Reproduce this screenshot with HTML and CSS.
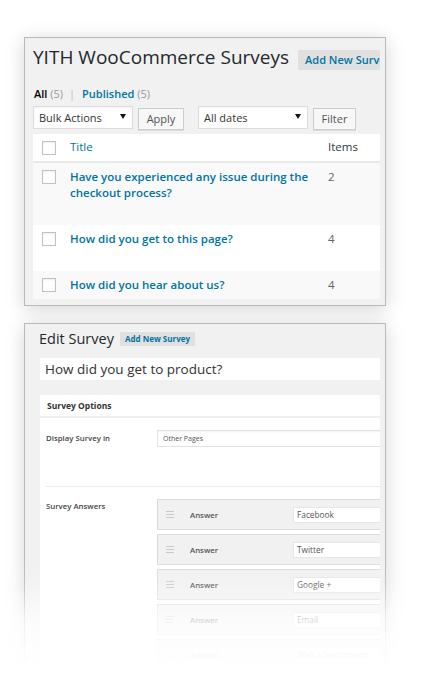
FILE: index.html
```html
<!DOCTYPE html>
<html>
<head>
<meta charset="utf-8">
<link rel="stylesheet" href="styles.css">
</head>
<body>
<div class="stage">
  <section class="panel panel-list">
    <div class="clip">
      <div class="head">
        <h1 class="h1">YITH WooCommerce Surveys</h1>
        <span class="btn-add">Add New Survey</span>
      </div>
      <div class="subsub">
        <b class="cur">All</b> <span class="count">(5)</span><span class="sep">|</span><span class="lnk">Published</span> <span class="count">(5)</span>
      </div>
      <div class="controls">
        <div class="select sel-bulk"><span>Bulk Actions</span><i class="caret"></i></div>
        <span class="btn btn-apply">Apply</span>
        <div class="select sel-dates"><span>All dates</span><i class="caret"></i></div>
        <span class="btn btn-filter">Filter</span>
      </div>
      <div class="table">
        <div class="tr th">
          <span class="cbcell"><span class="cb"></span></span>
          <span class="ttl">Title</span>
          <span class="items">Items</span>
        </div>
        <div class="tr alt">
          <span class="cbcell"><span class="cb"></span></span>
          <span class="ttl strong">Have you experienced any issue during the checkout process?</span>
          <span class="items num">2</span>
        </div>
        <div class="tr">
          <span class="cbcell"><span class="cb"></span></span>
          <span class="ttl strong">How did you get to this page?</span>
          <span class="items num">4</span>
        </div>
        <div class="tr alt">
          <span class="cbcell"><span class="cb"></span></span>
          <span class="ttl strong">How did you hear about us?</span>
          <span class="items num">4</span>
        </div>
      </div>
    </div>
  </section>

  <section class="panel panel-edit">
    <div class="clip">
      <div class="head2">
        <h2 class="h2">Edit Survey</h2>
        <span class="btn-add2">Add New Survey</span>
      </div>
      <div class="title-input">How did you get to product?</div>
      <div class="box">
        <div class="box-head">Survey Options</div>
        <div class="box-body">
          <div class="field field-display">
            <span class="label">Display Survey in</span>
            <div class="text-input small">Other Pages</div>
          </div>
          <div class="field field-answers">
            <span class="label">Survey Answers</span>
            <div class="answers">
              <div class="answer"><span class="handle"><i></i><i></i><i></i></span><span class="a-label">Answer</span><span class="a-input">Facebook</span></div>
              <div class="answer"><span class="handle"><i></i><i></i><i></i></span><span class="a-label">Answer</span><span class="a-input">Twitter</span></div>
              <div class="answer"><span class="handle"><i></i><i></i><i></i></span><span class="a-label">Answer</span><span class="a-input">Google +</span></div>
              <div class="answer"><span class="handle"><i></i><i></i><i></i></span><span class="a-label">Answer</span><span class="a-input">Email</span></div>
              <div class="answer"><span class="handle"><i></i><i></i><i></i></span><span class="a-label">Answer</span><span class="a-input">Web advertisment</span></div>
            </div>
          </div>
        </div>
      </div>
    </div>
  </section>
  <div class="fade"></div>
</div>
</body>
</html>
```

FILE: styles.css
```css
* { box-sizing: border-box; }
html, body { margin: 0; padding: 0; background: #fff; overflow: hidden; }
body { font-family: "Open Sans", "DejaVu Sans", sans-serif; color: #444; }

.stage {
  position: relative;
  width: 422px;
  height: 694px;
  padding: 37px 0 0 24px;
  display: flex;
  flex-direction: column;
  gap: 17px;
  overflow: hidden;
}

.panel {
  width: 362px;
  background: #f1f1f1;
  border: 1px solid #b9b9b9;
  box-shadow: 0 3px 18px rgba(0, 0, 0, 0.17);
  flex: none;
}

.clip {
  overflow: hidden;
  margin-right: 5px;
  height: 100%;
}

/* ---------- panel 1 ---------- */
.panel-list { height: 269px; }
.panel-list .clip { padding: 4px 0 0 8px; }

.head { display: flex; align-items: flex-start; white-space: nowrap; }
.h1 {
  margin: 0;
  font-size: 19px;
  font-weight: 400;
  line-height: 31px;
  color: #23282d;
}
.btn-add {
  flex: none;
  margin: 8px 0 0 9px;
  height: 20px;
  line-height: 20px;
  padding: 0 7px;
  background: #e0e0e0;
  color: #0074a2;
  font-size: 11px;
  font-weight: 600;
}

.subsub {
  margin-top: 13px;
  font-size: 11px;
  line-height: 16px;
  color: #999;
  padding-left: 1px;
}
.cur { color: #000; font-weight: 600; }
.count { color: #999; }
.sep { color: #bbb; padding: 0 7px 0 6px; }
.lnk { color: #0074a2; font-weight: 600; }

.controls {
  margin-top: 4px;
  display: flex;
  align-items: flex-start;
  height: 24px;
}
.select {
  height: 23px;
  background: #fff;
  border: 1px solid #ddd;
  box-shadow: inset 0 1px 2px rgba(0,0,0,0.05);
  display: flex;
  align-items: center;
  justify-content: space-between;
  padding: 0 6px 0 5px;
  font-size: 11px;
  color: #333;
}
.sel-bulk { width: 100px; }
.sel-dates { width: 110px; margin-left: 14px; }
.caret {
  width: 0; height: 0;
  border-left: 3px solid transparent;
  border-right: 3px solid transparent;
  border-top: 5px solid #111;
  margin-top: -2px;
}
.btn {
  margin: 2px 0 0 5px;
  height: 22px;
  line-height: 20px;
  border: 1px solid #ccc;
  background: #f7f7f7;
  box-shadow: 0 1px 0 #ddd;
  font-size: 11px;
  color: #555;
  text-align: center;
}
.btn-apply { width: 46px; }
.btn-filter { width: 43px; }

.table {
  margin-top: 4px;
  width: 400px;
  height: 165px;
  overflow: hidden;
  background: #fff;
}
.tr {
  display: grid;
  grid-template-columns: 37px 258px 1fr;
  align-items: start;
  padding: 6px 0 24px;
  background: #fff;
}
.tr.alt { background: #f9f9f9; }
.tr.th {
  padding: 5px 0 6px;
  border-bottom: 2px solid #e9e9e9;
}
.cbcell { padding: 1px 0 0 9px; }
.tr.th .cbcell { padding-top: 2px; }
.cb {
  display: block;
  width: 14px;
  height: 14px;
  border: 1px solid #c2c2c2;
  background: #fff;
  box-shadow: inset 0 1px 2px rgba(0,0,0,0.07);
}
.ttl {
  font-size: 11.5px;
  line-height: 16px;
  color: #0074a2;
  padding-right: 10px;
}
.ttl.strong { font-weight: 600; }
.items {
  font-size: 11.5px;
  line-height: 16px;
  color: #32373c;
}
.items.num { color: #666; }

/* ---------- panel 2 ---------- */
.panel-edit { height: 420px; }
.panel-edit .clip { padding: 5px 0 0 15px; }

.head2 { display: flex; align-items: center; height: 20px; white-space: nowrap; }
.h2 {
  margin: 0 0 0 -1px;
  font-size: 14.5px;
  font-weight: 400;
  line-height: 20px;
  color: #23282d;
}
.btn-add2 {
  margin-left: 6px;
  height: 14px;
  line-height: 14px;
  padding: 0 5px;
  background: #e0e0e0;
  color: #0074a2;
  font-size: 8px;
  font-weight: 700;
}

.title-input {
  margin-top: 9px;
  width: 400px;
  height: 22px;
  background: #fff;
  padding-left: 5px;
  font-size: 13.5px;
  line-height: 22px;
  color: #333;
}

.box {
  margin-top: 15px;
  width: 400px;
  background: #fff;
}
.box-head {
  height: 23px;
  padding: 0 0 0 7px;
  border-bottom: 2px solid #eee;
  font-size: 8.5px;
  font-weight: 700;
  line-height: 21px;
  color: #333;
}
.box-body {
  padding: 12px 0 0 6px;
  height: 320px;
}
.field { display: flex; align-items: flex-start; }
.label {
  flex: none;
  width: 111px;
  font-size: 7.8px;
  font-weight: 600;
  line-height: 17px;
  color: #444;
}
.field-display {
  height: 57px;
  border-bottom: 1px solid #ececec;
}
.text-input {
  flex: 1;
  height: 17px;
  border: 1px solid #e3e3e3;
  background: #fff;
  box-shadow: inset 0 1px 2px rgba(0,0,0,0.05);
  padding-left: 5px;
  font-size: 7px;
  line-height: 15px;
  color: #555;
}
.field-answers { padding-top: 12px; }
.field-answers .label { line-height: 14px; }
.answers { flex: 1; }
.answer {
  height: 31px;
  margin-bottom: 4px;
  background: #f1f1f1;
  border: 1px solid #dcdcdc;
  display: flex;
  align-items: center;
  padding-left: 8px;
  white-space: nowrap;
}
.handle {
  width: 8px;
  display: flex;
  flex-direction: column;
  gap: 2px;
}
.handle i {
  display: block;
  height: 1px;
  background: #c9c9c9;
}
.a-label {
  margin-left: 16px;
  width: 103px;
  font-size: 7.8px;
  font-weight: 600;
  color: #555;
}
.a-input {
  flex: 1;
  height: 16px;
  background: #fff;
  border: 1px solid #e6e6e6;
  padding-left: 3px;
  font-size: 8.3px;
  line-height: 14px;
  color: #555;
}

.fade {
  position: absolute;
  left: 0;
  right: 0;
  top: 560px;
  height: 134px;
  background: linear-gradient(to bottom,
    rgba(255,255,255,0) 0px,
    rgba(255,255,255,0.15) 25px,
    rgba(255,255,255,0.75) 59px,
    rgba(255,255,255,0.94) 92px,
    #fff 110px);
}
```
